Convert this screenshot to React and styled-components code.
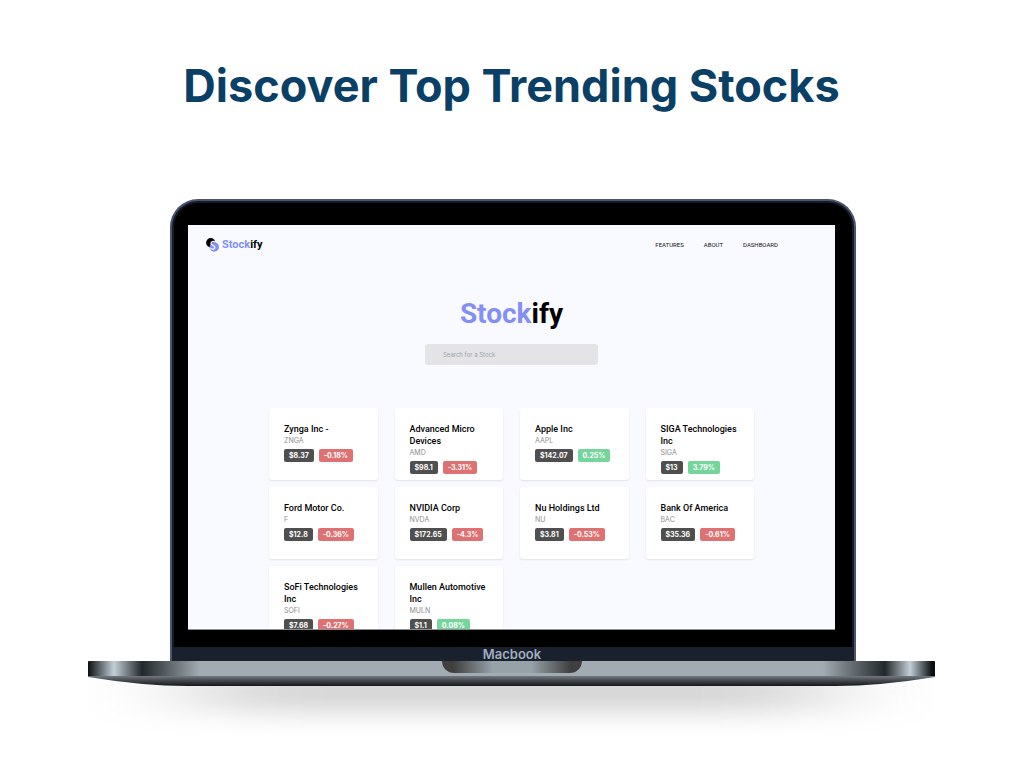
import React from "react";
import styled, { createGlobalStyle } from "styled-components";

const Global = createGlobalStyle`
  *, *::before, *::after { box-sizing: border-box; }
  body {
    margin: 0;
    background: #fff;
    font-family: Inter, "Liberation Sans", sans-serif;
    color: #000;
  }
`;

const Page = styled.main`
  min-height: 100vh;
  padding: 58px 90px 16px 88px;
  overflow: hidden;
`;

const Headline = styled.h1`
  margin: 0 0 85px;
  color: #0b4066;
  font-size: 45px;
  line-height: 56px;
  font-weight: 700;
  text-align: center;
`;

const Laptop = styled.div`
  max-width: 847px;
  margin: 0 auto;
`;

const Lid = styled.div`
  margin: 0 79px 0 82px;
  padding: 2px 2px 0;
  border: solid #4a566b;
  border-width: 2px 2px 0;
  border-radius: 28px 28px 0 0;
  background: #141c2b;
`;

const Bezel = styled.div`
  padding: 22px 17px 17px 14px;
  border-radius: 24px 24px 0 0;
  background: #000;
`;

const Screen = styled.div`
  height: 405px;
  overflow: hidden;
  border-bottom: 1px solid #8f9093;
  background: #f9faff;
`;

const Chin = styled.div`
  height: 14px;
  margin: 0 -2px;
  padding-right: 2px;
  background: #1a202c;
  color: #a0aec0;
  font-size: 13px;
  line-height: 14px;
  font-weight: 600;
  text-align: center;
`;

const TopBar = styled.header`
  display: flex;
  align-items: center;
  justify-content: space-between;
  padding: 12px 57px 0 18px;
`;

const Brand = styled.a`
  display: flex;
  align-items: center;
  gap: 3px;
  color: #000;
  font-family: Roboto, "Liberation Sans", sans-serif;
  font-size: 11px;
  line-height: 16px;
  font-weight: 700;
  text-decoration: none;
`;

const Accent = styled.span`
  color: #848ff5;
`;

const Nav = styled.nav`
  display: flex;
  gap: 20px;
`;

const NavLink = styled.a`
  color: #111;
  font-family: Roboto, "Liberation Sans", sans-serif;
  font-size: 6px;
  line-height: 16px;
  text-decoration: none;
`;

const Hero = styled.section`
  display: flex;
  flex-direction: column;
  align-items: center;
  gap: 14px;
  padding-top: 45px;
`;

const HeroTitle = styled.h2`
  margin: 0;
  font-family: Roboto, "Liberation Sans", sans-serif;
  font-size: 28px;
  line-height: 32px;
  font-weight: 700;
`;

const Search = styled.input`
  width: 173px;
  height: 21px;
  padding: 0 18px;
  border: 0;
  border-radius: 3px;
  background: #e4e4e6;
  font: 400 6px/9px Inter, "Liberation Sans", sans-serif;
  &::placeholder { color: #9ca3af; opacity: 1; }
`;

const Stocks = styled.ul`
  display: grid;
  grid-template-columns: repeat(4, 1fr);
  grid-auto-rows: 72px;
  gap: 7px 17px;
  margin: 43px 81px 0;
  padding: 0;
  list-style: none;
`;

const Card = styled.li`
  padding: 15px 10px 0 15px;
  border-radius: 3px;
  background: #fff;
  box-shadow: 0 1px 2px rgba(0, 0, 0, 0.1);
`;

const Name = styled.h3`
  margin: 0;
  font-family: Roboto, "Liberation Sans", sans-serif;
  font-size: 9px;
  line-height: 12px;
  font-weight: 500;
`;

const Ticker = styled.p`
  margin: 0;
  padding-top: 1px;
  color: #8e8e8e;
  font-size: 7px;
  line-height: 10px;
`;

const Quote = styled.div`
  display: flex;
  gap: 5px;
  padding-top: 3px;
`;

const tones = { price: "#4f4f4f", down: "#de7273", up: "#75d69c" };

const Badge = styled.span`
  padding: 0 5px;
  border-radius: 2px;
  background: ${(p) => tones[p.$tone]};
  color: #fff;
  font-size: 7px;
  line-height: 13px;
  font-weight: 700;
`;

const Deck = styled.div`
  display: flex;
  justify-content: center;
  height: 15px;
  border-radius: 1px 1px 0 0;
  background: linear-gradient(
    90deg,
    #0b0f12 0, #c3ced6 26px, #22282b 54px, #a2abb2 112px,
    #a2abb2 calc(100% - 112px), #22282b calc(100% - 50px),
    #c3ced6 calc(100% - 25px), #0b0f12 calc(100% - 3px)
  );
`;

const Notch = styled.div`
  width: 140px;
  height: 12px;
  border-radius: 0 0 12px 12px;
  background: linear-gradient(90deg, #3f3f3f 8%, #96a1a8 36%, #96a1a8 64%, #3f3f3f 92%);
`;

const Base = styled.svg`
  display: block;
  width: 100%;
  height: 74px;
`;

const stocks = [
  ["Zynga Inc -", "ZNGA", "$8.37", "-0.18%"],
  ["Advanced Micro Devices", "AMD", "$98.1", "-3.31%"],
  ["Apple Inc", "AAPL", "$142.07", "0.25%"],
  ["SIGA Technologies Inc", "SIGA", "$13", "3.79%"],
  ["Ford Motor Co.", "F", "$12.8", "-0.36%"],
  ["NVIDIA Corp", "NVDA", "$172.65", "-4.3%"],
  ["Nu Holdings Ltd", "NU", "$3.81", "-0.53%"],
  ["Bank Of America", "BAC", "$35.36", "-0.61%"],
  ["SoFi Technologies Inc", "SOFI", "$7.68", "-0.27%"],
  ["Mullen Automotive Inc", "MULN", "$1.1", "0.08%"],
];

function Logo() {
  return (
    <svg width="13" height="14" viewBox="0 0 13 14" aria-hidden="true">
      <circle cx="4.7" cy="4.7" r="4.6" fill="#000" />
      <circle cx="8.3" cy="9" r="4.7" fill="#848ff5" />
      <path
        d="M8.9 4.3C7.4 2.6 4.9 3.5 5 5.5c.1 2.2 3.9 1.5 3.9 3.900 0 2-2.600 2.300-4.300.7"
        fill="none"
        stroke="#f9faff"
        strokeWidth="1.3"
      />
    </svg>
  );
}

function Underside() {
  return (
    <Base viewBox="0 0 847 74" preserveAspectRatio="none" aria-hidden="true">
      <defs>
        <linearGradient id="metal" x1="0" y1="0" x2="0" y2="1">
          <stop offset="0" stopColor="#717a80" />
          <stop offset="0.4" stopColor="#4a4e54" />
          <stop offset="1" stopColor="#15161a" />
        </linearGradient>
        <filter id="soften" x="-35%" y="-200%" width="170%" height="500%">
          <feGaussianBlur stdDeviation="60 13" />
        </filter>
      </defs>
      <rect x="110" y="-5" width="627" height="41" fill="#000" fillOpacity="0.17" filter="url(#soften)" />
      <path d="M0 0H847V1Q792 10 747 10H100Q55 10 0 1Z" fill="url(#metal)" />
    </Base>
  );
}

export default function App() {
  return (
    <Page>
      <Global />
      <Headline>Discover Top Trending Stocks</Headline>
      <Laptop>
        <Lid>
          <Bezel>
            <Screen>
              <TopBar>
                <Brand href="#">
                  <Logo />
                  <span><Accent>Stock</Accent>ify</span>
                </Brand>
                <Nav>
                  <NavLink href="#features">FEATURES</NavLink>
                  <NavLink href="#about">ABOUT</NavLink>
                  <NavLink href="#dashboard">DASHBOARD</NavLink>
                </Nav>
              </TopBar>
              <Hero>
                <HeroTitle><Accent>Stock</Accent>ify</HeroTitle>
                <Search type="search" aria-label="Search for a Stock" placeholder="Search for a Stock" />
              </Hero>
              <Stocks>
                {stocks.map(([name, ticker, price, change]) => (
                  <Card key={ticker}>
                    <Name>{name}</Name>
                    <Ticker>{ticker}</Ticker>
                    <Quote>
                      <Badge $tone="price">{price}</Badge>
                      <Badge $tone={change.startsWith("-") ? "down" : "up"}>{change}</Badge>
                    </Quote>
                  </Card>
                ))}
              </Stocks>
            </Screen>
          </Bezel>
          <Chin>Macbook</Chin>
        </Lid>
        <Deck><Notch /></Deck>
        <Underside />
      </Laptop>
    </Page>
  );
}
